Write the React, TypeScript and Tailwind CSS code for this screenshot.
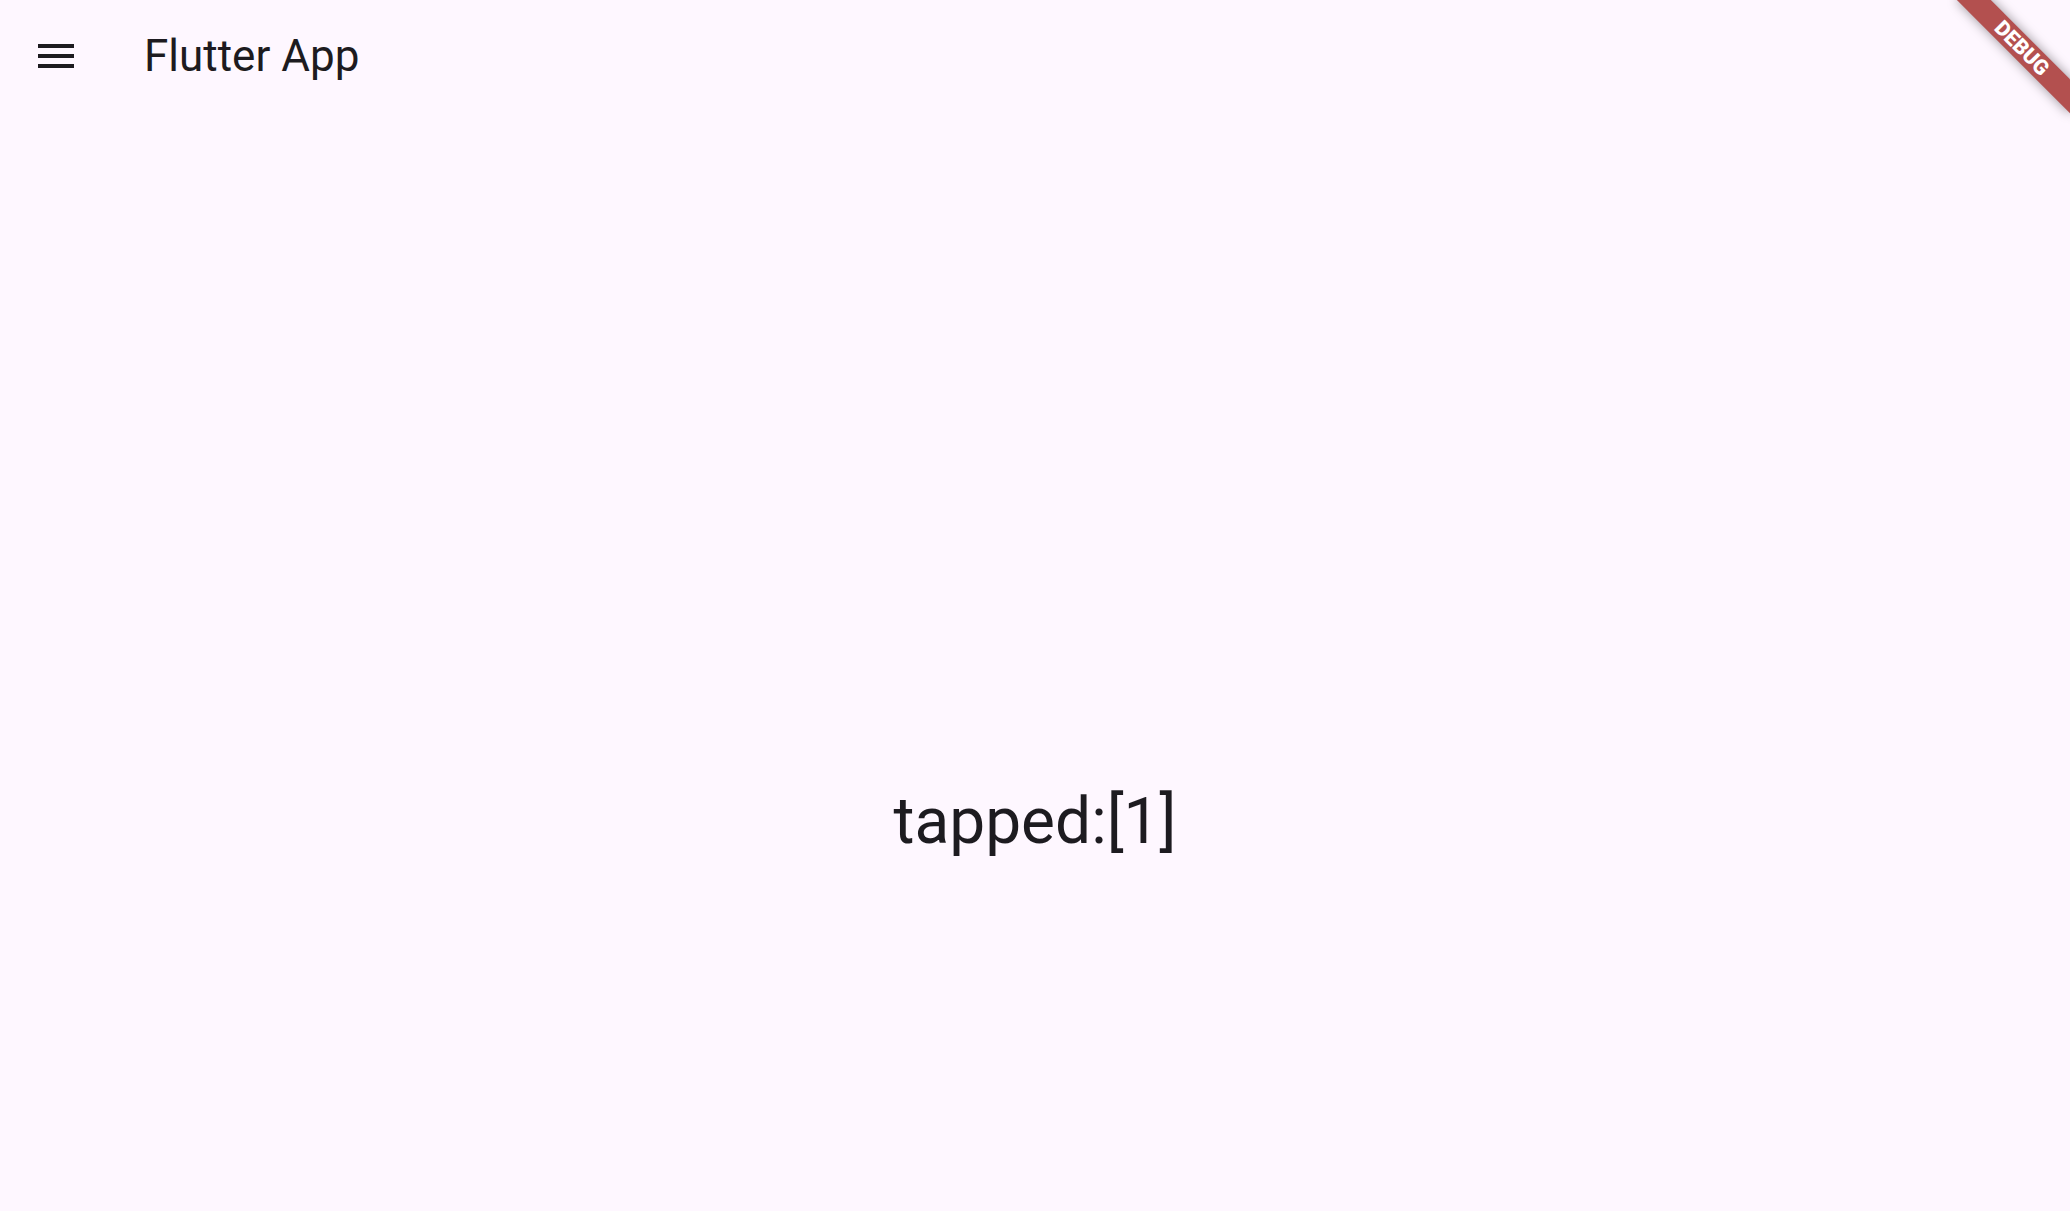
import React from "react";

function MenuIcon() {
  return (
    <svg width="48" height="48" viewBox="0 0 24 24" fill="#1d1b20">
      <path d="M3 18h18v-2H3v2zm0-5h18v-2H3v2zm0-7v2h18V6H3z" />
    </svg>
  );
}

function DebugBanner() {
  return (
    <div className="absolute top-0 right-0 w-0 h-0 pointer-events-none">
      <div className="absolute left-0 top-0 origin-top-left rotate-45">
        <div className="absolute left-[-80px] top-[56px] w-[160px] h-[24px] bg-[#b3504f] shadow-[0_0_12px_rgba(0,0,0,0.4)] flex items-center justify-center">
          <span className="text-white font-black text-[21px] leading-none">
            DEBUG
          </span>
        </div>
      </div>
    </div>
  );
}

export default function App() {
  return (
    <div
      className="relative w-[2070px] h-[1211px] overflow-hidden bg-[#fef7ff] text-[#1d1b20] flex flex-col"
      style={{ fontFamily: "Roboto, 'Noto Sans', sans-serif" }}
    >
      {/* App bar */}
      <header className="h-[112px] flex items-center shrink-0">
        <div className="w-[112px] h-[112px] flex items-center justify-center">
          <MenuIcon />
        </div>
        <h1 className="ml-[32px] text-[44px] leading-[56px] font-normal">
          Flutter App
        </h1>
      </header>

      {/* Body */}
      <main className="flex-1 flex flex-col items-center pt-[670px]">
        <div className="text-[64px] leading-[80px] font-normal">tapped:[1]</div>
      </main>

      <DebugBanner />
    </div>
  );
}
